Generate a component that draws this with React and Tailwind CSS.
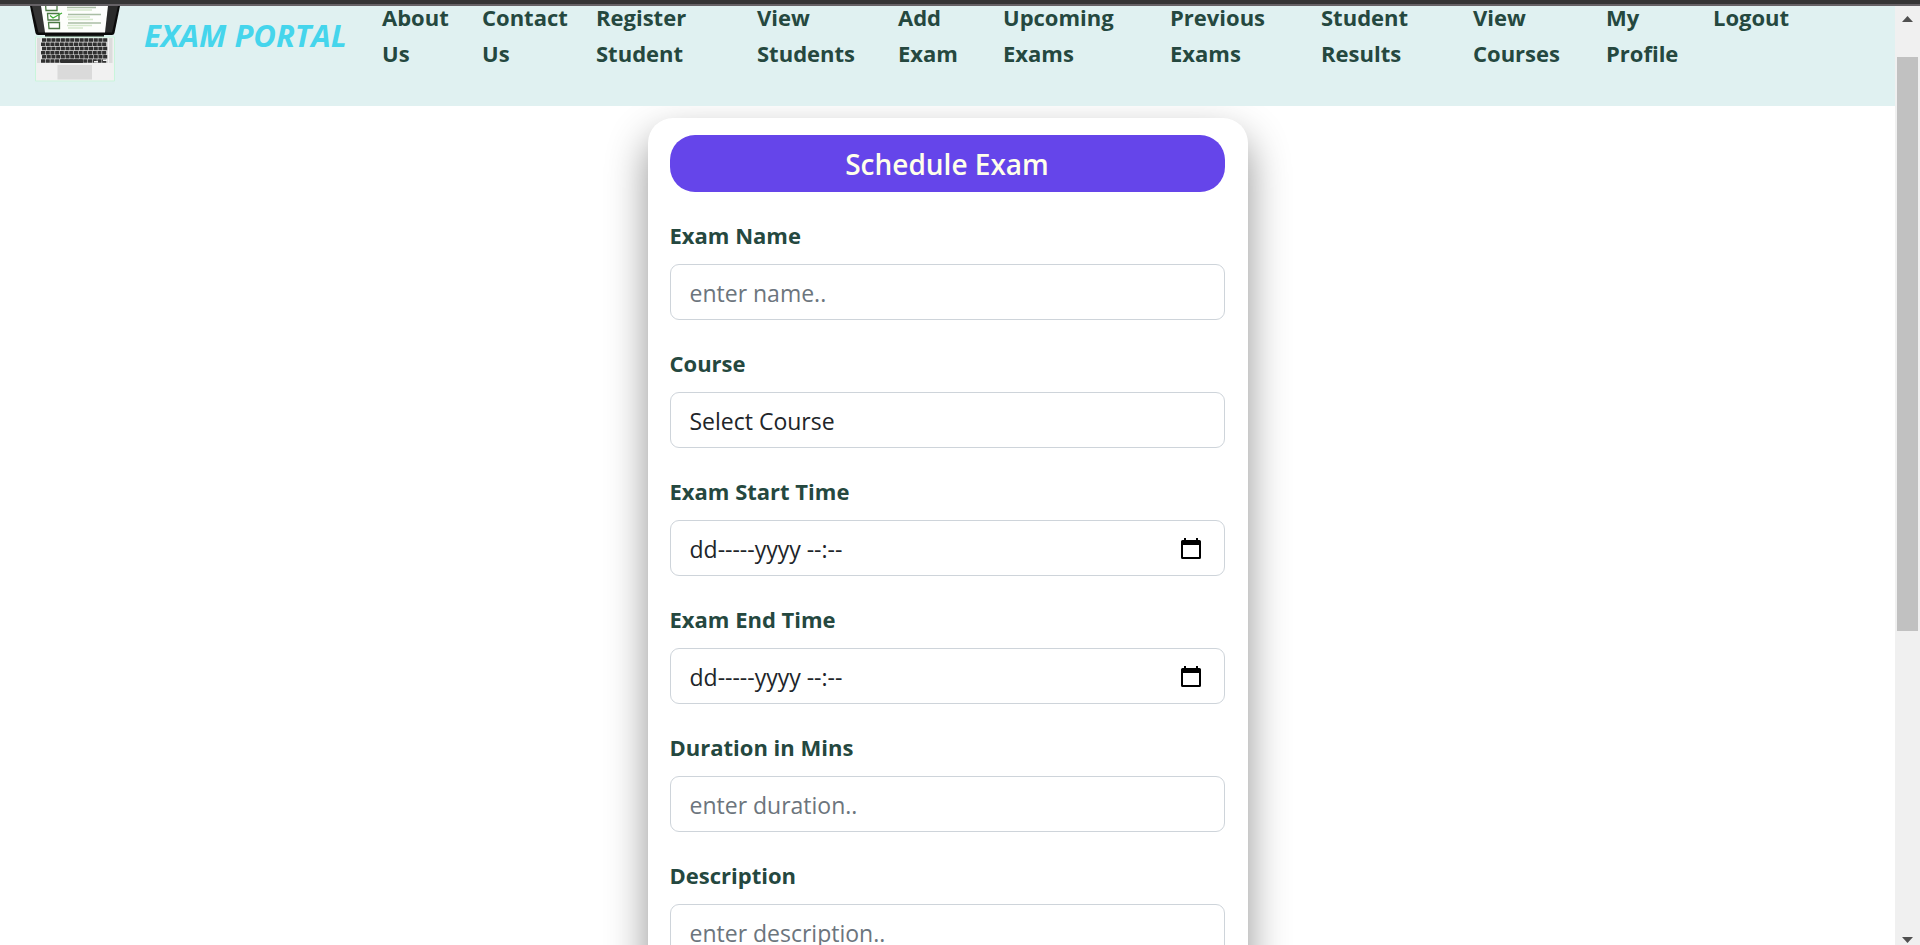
const NAV_LINKS = [
  ["About", "Us"],
  ["Contact", "Us"],
  ["Register", "Student"],
  ["View", "Students"],
  ["Add", "Exam"],
  ["Upcoming", "Exams"],
  ["Previous", "Exams"],
  ["Student", "Results"],
  ["View", "Courses"],
  ["My", "Profile"],
  ["Logout"],
];

const KEY_ROWS = [0, 1, 2, 3, 4, 5];
const KEY_COLUMNS = [0, 1, 2, 3, 4, 5, 6, 7, 8, 9, 10, 11, 12, 13];

function LaptopLogo() {
  return (
    <svg viewBox="0 0 94 78" className="h-[78px] w-[94px] shrink-0" aria-hidden="true">
      <path d="M2 0H92L86.500 27Q86 29 84 29H10Q8 29 7.500 27Z" fill="#0b0b0b" />
      <path d="M4 0H13L17 26.500H10.500Z" fill="#333" />
      <path d="M90 0H80L77 26.500H84Z" fill="#2a2a2a" />
      <path d="M13 0H80L77 26.500H17Z" fill="#fdfefc" />
      <g fill="none" stroke="#4b7a43" strokeWidth="1.300">
        <path d="M17.500 -2H29V4.500H18Z" />
        <path d="M19.500 7.500H31V14H20Z" />
        <path d="M20.500 16.500H31.500V22.500H21Z" />
      </g>
      <path d="M22 9.500L25 12L34 7" fill="none" stroke="#3fae35" strokeWidth="1.200" />
      <g strokeWidth="1.300">
        <path d="M39 1.500H68M40 8.500H73M40 17H73" stroke="#a9bda4" />
        <path d="M39 4H64M39 11H62M40 13.500H65M39 19.500H64M40 22H55" stroke="#d5e8cc" />
      </g>
      <path d="M17 29H76V31H17Z" fill="#1c1c1c" />
      <path d="M7.500 31H86.500V75H7.500Z" fill="#f1f1f1" stroke="#c9f5db" />
      <path d="M9 32H12.500V57H9ZM81 32H84.500V57H81Z" fill="#dcdcdc" />
      <path d="M13.500 32H80V57H13.500Z" fill="#d9d9d9" />
      {KEY_ROWS.map((row) =>
        KEY_COLUMNS.map((column) => (
          <rect
            key={`${row}-${column}`}
            x={14 + column * 4.7 - (row % 2)}
            y={32.300 + row * 4.2}
            width="4.100"
            height="3.500"
            rx="0.300"
            fill="#303030"
          />
        ))
      )}
      <path d="M33 53.300H55V57H33Z" fill="#303030" />
      <path d="M66 55H70V56.500H66ZM75 53.500H79V55H75Z" fill="#f1f1f1" />
      <path d="M29.500 59H64V73.500H29.500Z" fill="#dadada" />
    </svg>
  );
}

function CalendarIcon() {
  return (
    <svg viewBox="0 0 20 21" className="h-[21px] w-5" aria-hidden="true">
      <path
        d="M3 0H5V2H15V0H17V2H18.500Q20 2 20 3.500V19.500Q20 21 18.500 21H1.500Q0 21 0 19.500V3.500Q0 2 1.500 2H3ZM2 7V19H18V7Z"
        fill="#000"
        fillRule="evenodd"
      />
    </svg>
  );
}

const CONTROL =
  "block h-14 w-full rounded-[9px] border border-[#ced4da] bg-white px-[19px] pt-0.5 text-[23px] leading-9 text-[#212529] outline-none";

function Field({ id, label, children }) {
  return (
    <div className="mb-6">
      <label htmlFor={id} className="mb-2.5 block text-[22px] leading-[38px] font-bold text-[#25483f]">
        {label}
      </label>
      {children}
    </div>
  );
}

function TextField({ id, label, placeholder }) {
  return (
    <Field id={id} label={label}>
      <input id={id} type="text" placeholder={placeholder} className={`${CONTROL} placeholder:text-[#6c757d]`} />
    </Field>
  );
}

function DateTimeField({ id, label }) {
  return (
    <Field id={id} label={label}>
      <div className="flex h-14 items-center rounded-[9px] border border-[#ced4da] bg-white pr-[23px] pl-[19px]">
        <input
          id={id}
          type="text"
          placeholder="dd-----yyyy --:--"
          className="min-w-0 flex-1 bg-transparent pt-0.5 text-[23px] leading-9 outline-none placeholder:text-[#212529]"
        />
        <button type="button" aria-label={`Pick ${label}`}>
          <CalendarIcon />
        </button>
      </div>
    </Field>
  );
}

function Navbar() {
  return (
    <nav className="relative z-10 flex h-[100px] items-start bg-[#e0f1f1] pl-7">
      <a href="#home" className="flex w-[354px] shrink-0 items-start gap-[22px]">
        <LaptopLogo />
        <span className="pt-[7px] text-[31px] leading-[44px] font-bold whitespace-nowrap text-[#45d5ec] italic">EXAM PORTAL</span>
      </a>
      <ul className="-mt-[7px] grid flex-1 grid-cols-[100fr_114fr_161fr_141fr_105fr_167fr_151fr_152fr_133fr_107fr_182fr]">
        {NAV_LINKS.map((words) => (
          <li key={words.join(" ")}>
            <a href={`#${words.join("-").toLowerCase()}`} className="block text-[22px] leading-9 font-bold text-[#25483f]">
              {words.map((word) => (
                <span key={word} className="block">
                  {word}
                </span>
              ))}
            </a>
          </li>
        ))}
      </ul>
    </nav>
  );
}

function ScrollRail() {
  return (
    <div className="flex w-[25px] shrink-0 flex-col items-center bg-[#f0f0f0] pt-2.5 pb-0.5" aria-hidden="true">
      <svg viewBox="0 0 11 6" className="h-1.5 w-[11px]">
        <path d="M0 6L5.500 0L11 6Z" fill="#505050" />
      </svg>
      <div className="mt-[35px] h-[574px] w-[21px] bg-[#c1c1c1]" />
      <svg viewBox="0 0 11 6" className="mt-auto h-1.5 w-[11px]">
        <path d="M0 0L5.500 6L11 0Z" fill="#505050" />
      </svg>
    </div>
  );
}

export default function App() {
  return (
    <div className="flex h-screen flex-col overflow-hidden bg-white font-['Open_Sans','Noto_Sans',sans-serif]">
      <div className="h-1.5 shrink-0 border-b-2 border-[#666266] bg-[#353535]" />
      <div className="flex min-h-0 flex-1">
        <div className="min-w-0 flex-1">
          <Navbar />
          <main className="flex justify-center pt-3">
            <form className="w-[600px] rounded-[25px] bg-white pt-[17px] pr-[23px] pb-6 pl-[22px] shadow-[0_19px_40px_rgba(0,0,0,0.43)]">
              <h1 className="mb-6 rounded-[25px] bg-[#6545ea] pt-[11px] pb-[9px] text-center text-[28px] leading-[37px] font-semibold text-[#ffffeb]">
                Schedule Exam
              </h1>
              <TextField id="exam-name" label="Exam Name" placeholder="enter name.." />
              <Field id="course" label="Course">
                <select id="course" defaultValue="" className={`${CONTROL} appearance-none`}>
                  <option value="">Select Course</option>
                </select>
              </Field>
              <DateTimeField id="start-time" label="Exam Start Time" />
              <DateTimeField id="end-time" label="Exam End Time" />
              <TextField id="duration" label="Duration in Mins" placeholder="enter duration.." />
              <TextField id="description" label="Description" placeholder="enter description.." />
            </form>
          </main>
        </div>
        <ScrollRail />
      </div>
    </div>
  );
}
